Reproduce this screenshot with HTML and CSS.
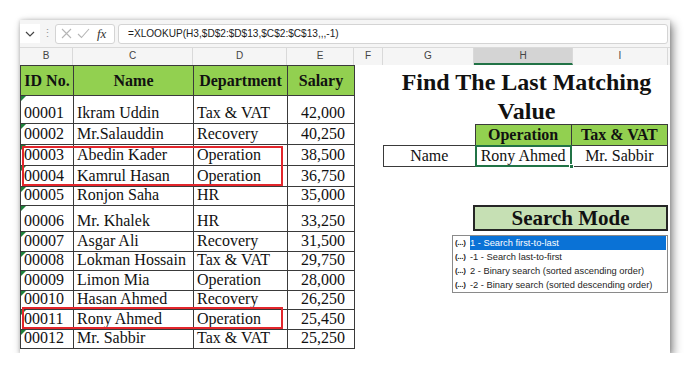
FILE: index.html
```html
<!DOCTYPE html>
<html lang="en">
<head>
    <meta charset="UTF-8">
    <meta name="viewport" content="width=device-width, initial-scale=1.0">
    <title>Find The Last Matching Value</title>
    <link rel="stylesheet" href="styles.css">
</head>

<body>
    <div class="window">
        <!-- formula bar -->
        <div class="fbar">
            <div class="namebox">
                <svg width="10" height="6" viewBox="0 0 10 6"><path d="M1 1 L5 5 L9 1" fill="none" stroke="#444" stroke-width="1.2"/></svg>
            </div>
            <div class="grip">⋮</div>
            <div class="fbtns">
                <svg width="11" height="11" viewBox="0 0 11 11"><path d="M1 1 L10 10 M10 1 L1 10" stroke="#b5b5b5" stroke-width="1.1"/></svg>
                <svg width="13" height="11" viewBox="0 0 13 11"><path d="M1 6 L4.5 9.5 L12 1" fill="none" stroke="#b5b5b5" stroke-width="1.1"/></svg>
                <span class="fx">fx</span>
            </div>
            <div class="formula">=XLOOKUP(H3,$D$2:$D$13,$C$2:$C$13,,,-1)</div>
        </div>

        <!-- column letters -->
        <div class="colhead">
            <div class="ch w-b">B</div>
            <div class="ch w-c">C</div>
            <div class="ch w-d">D</div>
            <div class="ch w-e">E</div>
            <div class="ch w-f">F</div>
            <div class="ch w-g">G</div>
            <div class="ch w-h active">H</div>
            <div class="ch w-i">I</div>
        </div>

        <div class="sheet">
            <div class="left">
                <table class="data">
                    <colgroup>
                        <col class="w-b"><col class="w-c"><col class="w-d"><col class="w-e">
                    </colgroup>
                    <tr class="head">
                        <th>ID No.</th><th>Name</th><th>Department</th><th>Salary</th>
                    </tr>
                    <tr class="r28"><td class="id">00001</td><td>Ikram Uddin</td><td>Tax &amp; VAT</td><td class="num">42,000</td></tr>
                    <tr class="r21"><td class="id">00002</td><td>Mr.Salauddin</td><td>Recovery</td><td class="num">40,250</td></tr>
                    <tr class="r21"><td class="id">00003</td><td>Abedin Kader</td><td>Operation</td><td class="num">38,500</td></tr>
                    <tr class="r21"><td class="id">00004</td><td>Kamrul Hasan</td><td>Operation</td><td class="num">36,750</td></tr>
                    <tr class="r19"><td class="id">00005</td><td>Ronjon Saha</td><td>HR</td><td class="num">35,000</td></tr>
                    <tr class="r26"><td class="id">00006</td><td>Mr. Khalek</td><td>HR</td><td class="num">33,250</td></tr>
                    <tr class="r20"><td class="id">00007</td><td>Asgar Ali</td><td>Recovery</td><td class="num">31,500</td></tr>
                    <tr class="r19"><td class="id">00008</td><td>Lokman Hossain</td><td>Tax &amp; VAT</td><td class="num">29,750</td></tr>
                    <tr class="r20"><td class="id">00009</td><td>Limon Mia</td><td>Operation</td><td class="num">28,000</td></tr>
                    <tr class="r19"><td class="id">00010</td><td>Hasan Ahmed</td><td>Recovery</td><td class="num">26,250</td></tr>
                    <tr class="r20"><td class="id">00011</td><td>Rony Ahmed</td><td>Operation</td><td class="num">25,450</td></tr>
                    <tr class="r19"><td class="id">00012</td><td>Mr. Sabbir</td><td>Tax &amp; VAT</td><td class="num">25,250</td></tr>
                </table>
                <div class="mark mark-a"></div>
                <div class="mark mark-b"></div>
            </div>

            <div class="right">
                <h1 class="title">Find The Last Matching<br>Value</h1>

                <table class="lookup">
                    <tr>
                        <td class="blank"></td>
                        <th>Operation</th>
                        <th>Tax &amp; VAT</th>
                    </tr>
                    <tr>
                        <td>Name</td>
                        <td class="sel">Rony Ahmed</td>
                        <td>Mr. Sabbir</td>
                    </tr>
                </table>

                <div class="mode">Search Mode</div>

                <ul class="modes">
                    <li class="picked"><span class="fn">(...)</span><span class="txt">1 - Search first-to-last</span></li>
                    <li><span class="fn">(...)</span><span class="txt">-1 - Search last-to-first</span></li>
                    <li><span class="fn">(...)</span><span class="txt">2 - Binary search (sorted ascending order)</span></li>
                    <li><span class="fn">(...)</span><span class="txt">-2 - Binary search (sorted descending order)</span></li>
                </ul>
            </div>
        </div>
    </div>
</body>
</html>
```

FILE: styles.css
```css
body {
    margin: 0;
    background-color: white;
    font-family: "Liberation Serif", serif;
    color: #111;
}

.window {
    margin: 20px 0 0 20px;
    width: 650px;
    height: 333px;
    background-color: white;
    overflow: hidden;
    box-shadow: 3px 4px 9px rgba(0, 0, 0, 0.45),
        0px 0px 4px rgba(0, 0, 0, 0.2);
}

/* formula bar */
.fbar {
    height: 27px;
    display: flex;
    align-items: center;
    background-color: #f5f5f5;
    border-bottom: 1px solid #dadada;
    font-family: "Liberation Sans", sans-serif;
}

.namebox {
    width: 20px;
    height: 19px;
    display: flex;
    align-items: center;
    justify-content: center;
    background-color: white;
}

.grip {
    width: 15px;
    text-align: center;
    font-size: 11px;
    color: #999;
}

.fbtns {
    width: 53px;
    height: 18px;
    display: flex;
    align-items: center;
    gap: 5px;
    padding-left: 5px;
    background-color: white;
    border: 1px solid #d4d4d4;
    border-radius: 3px;
}

.fx {
    font-family: "Liberation Serif", serif;
    font-style: italic;
    font-size: 13px;
    color: #333;
    margin-left: 2px;
}

.formula {
    flex: 1;
    height: 18px;
    margin: 0 2px 0 3px;
    padding-left: 9px;
    line-height: 18px;
    font-size: 10.1px;
    color: #222;
    background-color: white;
    border: 1px solid #d4d4d4;
    border-radius: 3px;
}

/* column widths */
.w-b { width: 53px; }
.w-c { width: 120px; }
.w-d { width: 94px; }
.w-e { width: 67px; }
.w-f { width: 29px; }
.w-g { width: 91px; }
.w-h { width: 99px; }
.w-i { width: 95px; }

.colhead {
    height: 17px;
    display: flex;
    background-color: #f5f5f5;
    font-family: "Liberation Sans", sans-serif;
    font-size: 10px;
    color: #444;
}

.ch {
    flex: none;
    box-sizing: border-box;
    text-align: center;
    line-height: 16px;
    border-right: 1px solid #d9d9d9;
}

.ch.active {
    background-color: #d4d4d4;
    border-bottom: 2px solid #217346;
}

.sheet {
    display: flex;
}

/* left data table */
.left {
    position: relative;
    width: 334px;
}

.data {
    width: 334px;
    table-layout: fixed;
    border-collapse: collapse;
    font-size: 16px;
}

.data th,
.data td {
    border: 1px solid #3a3a3a;
    padding: 0 0 2px 3px;
    vertical-align: bottom;
    line-height: 16px;
    white-space: nowrap;
    overflow: hidden;
}

.data .head th {
    height: 29px;
    padding: 0;
    text-align: center;
    vertical-align: middle;
    background-color: #92d050;
}

.data td.id {
    position: relative;
}

.data td.id::before {
    content: "";
    position: absolute;
    top: 0;
    left: 0;
    border-top: 5px solid #1e7f3a;
    border-right: 5px solid transparent;
}

.data td.num {
    text-align: right;
    padding-right: 9px;
}

.r28 td { height: 25px; }
.r26 td { height: 23px; }
.r21 td { height: 18px; }
.r20 td { height: 17px; }
.r19 td { height: 16px; }

.mark {
    position: absolute;
    left: 2px;
    width: 261px;
    box-sizing: border-box;
    border: 2px solid #e3262c;
}

.mark-a {
    top: 81px;
    height: 40px;
}

.mark-b {
    top: 242px;
    height: 22px;
}

/* right panel */
.right {
    width: 316px;
}

.title {
    margin: 0;
    padding: 3px 0 0 29px;
    height: 56px;
    font-size: 24px;
    line-height: 29px;
    text-align: center;
}

.lookup {
    margin-left: 29px;
    width: 285px;
    table-layout: fixed;
    border-collapse: collapse;
    font-size: 16px;
}

.lookup td,
.lookup th {
    height: 19px;
    padding: 0 0 1px 0;
    line-height: 18px;
    text-align: center;
    vertical-align: bottom;
    border: 1px solid #3a3a3a;
}

.lookup td:first-child { width: 91px; }
.lookup td:nth-child(2) { width: 99px; }

.lookup th {
    background-color: #92d050;
}

.lookup td.blank {
    border: none;
}

.lookup td.sel {
    position: relative;
}

.lookup td.sel::after {
    content: "";
    position: absolute;
    top: -1px;
    left: -1px;
    right: -1px;
    bottom: -1px;
    border: 2px solid #217346;
}

.lookup td.sel::before {
    content: "";
    position: absolute;
    right: -3px;
    bottom: -3px;
    width: 5px;
    height: 5px;
    background-color: #217346;
    border: 1px solid white;
    box-sizing: border-box;
    z-index: 1;
}

.mode {
    margin: 38px 0 0 119px;
    width: 195px;
    height: 26px;
    box-sizing: border-box;
    border: 2px solid #262626;
    background-color: #c6e0b4;
    font-size: 21px;
    font-weight: bold;
    line-height: 22px;
    text-align: center;
}

.modes {
    list-style: none;
    margin: 4px 0 0 98px;
    padding: 0;
    width: 216px;
    height: 58px;
    box-sizing: border-box;
    border: 1px solid #8a8a8a;
    font-family: "Liberation Sans", sans-serif;
    font-size: 9.3px;
    color: #1e1e1e;
}

.modes li {
    display: flex;
    height: 14px;
    line-height: 14px;
    white-space: nowrap;
}

.modes .fn {
    width: 15px;
    padding-left: 2px;
    font-size: 8px;
    font-weight: bold;
    letter-spacing: -0.3px;
}

.modes .txt {
    flex: 1;
    margin-right: 1px;
}

.modes li.picked .txt {
    background-color: #0a72d6;
    color: white;
}
```
